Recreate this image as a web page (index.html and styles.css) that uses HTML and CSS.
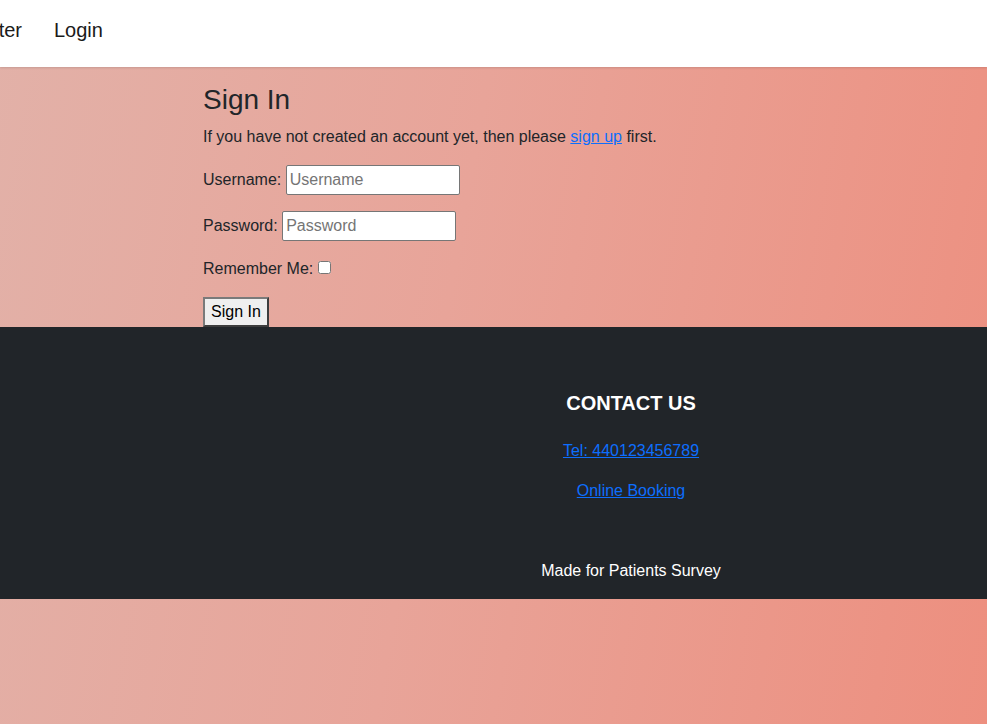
FILE: index.html
```html
<!DOCTYPE html>
<html lang="en">
<head>
<meta charset="utf-8">
<title>Sign In</title>
<link rel="stylesheet" href="styles.css">
</head>
<body>
<header class="navbar">
  <ul class="nav-list">
    <li><a class="nav-link" href="#">Register</a></li>
    <li><a class="nav-link" href="#">Login</a></li>
  </ul>
</header>
<main class="container">
  <h1 class="title">Sign In</h1>
  <p class="intro">If you have not created an account yet, then please <a class="link" href="#">sign up</a> first.</p>
  <form class="signin-form">
    <div class="form-row">
      <label class="form-label" for="username">Username:</label>
      <input class="text-input" id="username" type="text" placeholder="Username">
    </div>
    <div class="form-row">
      <label class="form-label" for="password">Password:</label>
      <input class="text-input" id="password" type="password" placeholder="Password">
    </div>
    <div class="form-row form-row-check">
      <label class="form-label" for="remember">Remember Me:</label>
      <input class="check-input" id="remember" type="checkbox">
    </div>
    <button class="submit-btn" type="submit">Sign In</button>
  </form>
</main>
<footer class="footer">
  <div class="footer-inner">
    <h2 class="footer-title">CONTACT US</h2>
    <p class="footer-item"><a class="link" href="#">Tel: 440123456789</a></p>
    <p class="footer-item"><a class="link" href="#">Online Booking</a></p>
    <p class="copyright">Made for Patients Survey</p>
  </div>
</footer>
</body>
</html>
```

FILE: styles.css
```css
html {
  min-height: 100%;
}
body {
  margin: 0;
  font-family: "Liberation Sans", Arial, sans-serif;
  font-size: 16px;
  line-height: 1.5;
  color: #212529;
  background: linear-gradient(100deg, #e2b1a8 0%, #e8a499 45%, #ed8f7f 100%);
  background-attachment: fixed;
  min-height: 100vh;
}
.navbar {
  height: 67px;
  background: #ffffff;
  box-shadow: 0 1px 2px rgba(0, 0, 0, 0.12);
  overflow: hidden;
}
.nav-list {
  list-style: none;
  margin: 0 0 0 -52.5px;
  padding: 19px 0 0 0;
  display: flex;
  gap: 32px;
}
.nav-link {
  font-size: 20px;
  line-height: 23px;
  color: #1a1a1a;
  text-decoration: none;
}
.container {
  width: 581px;
  margin: 0 auto;
  padding-top: 16px;
}
.title {
  margin: 0 0 8px;
  font-size: 28px;
  font-weight: 400;
  line-height: 1.2;
}
.intro {
  margin: 0 0 16px;
}
.link {
  color: #0d6efd;
  text-decoration: underline;
}
.signin-form {
  margin: 0;
}
.form-row {
  display: flex;
  align-items: center;
  gap: 4.45px;
  margin-bottom: 16px;
  min-height: 30px;
}
.form-row-check {
  min-height: 24px;
  gap: 0;
}
.text-input {
  box-sizing: border-box;
  width: 174px;
  height: 30px;
  margin: 0;
  padding: 1px 3px;
  border: 1px solid #767676;
  border-radius: 2px;
  background: #ffffff;
  font-family: "Liberation Sans", Arial, sans-serif;
  font-size: 16px;
  color: #212529;
}
.text-input::placeholder {
  color: #757575;
}
.check-input {
  width: 13px;
  height: 13px;
  margin: 0 0 2px 4.8px;
}
.submit-btn {
  display: block;
  margin: 0;
  padding: 1px 6px;
  height: 30px;
  font-family: "Liberation Sans", Arial, sans-serif;
  font-size: 16px;
  line-height: 24px;
  color: #000000;
  background: #efefef;
  border: 2px solid;
  border-color: #7a7a7a #3d3d3d #3d3d3d #7a7a7a;
}
.footer {
  background: #212529;
  color: #ffffff;
  padding: 64px 0 16px;
}
.footer-inner {
  margin-left: 275px;
  text-align: center;
}
.footer-title {
  margin: 0 0 24px;
  font-size: 20px;
  font-weight: 700;
  line-height: 24px;
}
.footer-item {
  margin: 0 0 16px;
}
.copyright {
  margin: 56px 0 0;
}
```
